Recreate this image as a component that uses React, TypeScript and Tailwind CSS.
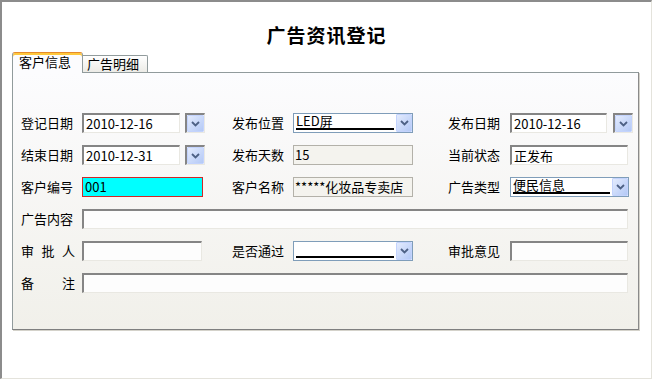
import React from "react";

const sunken =
  "border-t-2 border-l-2 border-b border-r border-t-[#858585] border-l-[#858585] border-b-[#e9e8e2] border-r-[#e9e8e2]";

function Chevron() {
  return (
    <svg width="9" height="6" viewBox="0 0 9 6">
      <path d="M1 1 L4.5 4.5 L8 1" fill="none" stroke="#4d6185" strokeWidth="1.8" />
    </svg>
  );
}

function DropBtn({ className = "" }: { className?: string }) {
  return (
    <div
      className={`flex items-center justify-center rounded-[1px] border border-[#c3d3fd] bg-linear-to-br from-[#e3ebfd] to-[#b4c9f6] ${className}`}
    >
      <Chevron />
    </div>
  );
}

function Label({ text, w = "w-[54px] mr-[7px]" }: { text: string; w?: string }) {
  return <div className={`${w} shrink-0 whitespace-nowrap text-[13px] leading-[20px] text-black`}>{text}</div>;
}

function Input({ value = "", w, bg = "bg-white" }: { value?: string; w: string; bg?: string }) {
  return (
    <div className={`${sunken} ${bg} ${w} h-[20px] shrink-0 overflow-hidden whitespace-nowrap px-[2px] text-[13px] leading-[17px]`}>
      {value}
    </div>
  );
}

function ReadOnly({ value, w }: { value: string; w: string }) {
  return (
    <div className={`${w} h-[20px] shrink-0 overflow-hidden whitespace-nowrap border border-[#b3b1a9] bg-[#f4f3ee] px-[1px] text-[13px] leading-[18px]`}>
      {value}
    </div>
  );
}

function DateBtn({ ml }: { ml: string }) {
  return (
    <div className={`${sunken} ${ml} flex h-[20px] w-[20px] shrink-0 bg-white`}>
      <DropBtn className="h-full w-full" />
    </div>
  );
}

function Select({ value, w }: { value: string; w: string }) {
  return (
    <div className={`${w} flex h-[20px] shrink-0 border border-[#7f9db9] bg-white`}>
      <div className="ml-[2px] mr-[2px] flex flex-1 items-end">
        <div className="mb-[2px] h-[16px] w-full whitespace-nowrap border-b-2 border-black text-[13px] leading-[14px]">
          {value}
        </div>
      </div>
      <DropBtn className="h-[18px] w-[16px]" />
    </div>
  );
}

export default function App() {
  return (
    <div className="h-[380px] w-[654px] bg-white font-['Noto_Sans_CJK_SC','Liberation_Sans',sans-serif] text-black">
      <div className="flex h-[379px] w-[652px] flex-col border-b border-l-2 border-r border-t-2 border-b-[#e4e3dc] border-l-[#8c8c8c] border-r-[#e4e3dc] border-t-[#8c8c8c]">
        <div className="h-[50px] pt-[23px] text-center text-[19px] font-bold leading-[20px] tracking-[1px]">
          广告资讯登记
        </div>

        <div className="ml-[10px] flex h-[20px] items-end">
          <div className="relative z-10 h-[21px] w-[71px] translate-y-[1px] rounded-t-[3px] border border-b-0 border-[#919b9c] border-t-[#e68b2c] bg-[#fcfcfe] pl-[6px] text-[13px] leading-[18px] shadow-[inset_0_2px_0_#ffc83c]">
            客户信息
          </div>
          <div className="h-[17px] w-[65px] rounded-tr-[2px] border border-b-0 border-l-0 border-[#919b9c] bg-linear-to-b from-white to-[#ecebe6] pl-[4px] text-[13px] leading-[16px]">
            广告明细
          </div>
        </div>

        <div className="ml-[10px] h-[258px] w-[627px] border border-[#919b9c] border-b-[#7f7f7f] border-r-[#8a8a8a] bg-linear-to-b from-[#fcfcfe] to-[#f1f0ea] pl-[8px] pt-[40px] shadow-[1px_1px_0_#d4d2ca]">
          <div className="flex flex-col gap-[12px]">
            <div className="flex">
              <div className="flex w-[211px]">
                <Label text="登记日期" />
                <Input value="2010-12-16" w="w-[98px]" />
                <DateBtn ml="ml-[5px]" />
              </div>
              <div className="flex w-[216px]">
                <Label text="发布位置" w="w-[55px] mr-[6px]" />
                <Select value="LED屏" w="w-[120px]" />
              </div>
              <div className="flex">
                <Label text="发布日期" w="w-[55px] mr-[7px]" />
                <Input value="2010-12-16" w="w-[97px]" />
                <DateBtn ml="ml-[6px]" />
              </div>
            </div>

            <div className="flex">
              <div className="flex w-[211px]">
                <Label text="结束日期" />
                <Input value="2010-12-31" w="w-[98px]" />
                <DateBtn ml="ml-[5px]" />
              </div>
              <div className="flex w-[216px]">
                <Label text="发布天数" w="w-[55px] mr-[6px]" />
                <ReadOnly value="15" w="w-[120px]" />
              </div>
              <div className="flex">
                <Label text="当前状态" w="w-[55px] mr-[7px]" />
                <Input value="正发布" w="w-[118px]" />
              </div>
            </div>

            <div className="flex">
              <div className="flex w-[211px]">
                <Label text="客户编号" />
                <div className="h-[20px] w-[121px] border border-[#d02828] bg-[#00ffff] px-[2px] text-[13px] leading-[18px]">
                  001
                </div>
              </div>
              <div className="flex w-[216px]">
                <Label text="客户名称" w="w-[55px] mr-[6px]" />
                <ReadOnly value="*****化妆品专卖店" w="w-[120px]" />
              </div>
              <div className="flex">
                <Label text="广告类型" w="w-[55px] mr-[7px]" />
                <Select value="便民信息" w="w-[119px]" />
              </div>
            </div>

            <div className="flex">
              <Label text="广告内容" />
              <Input w="w-[546px]" bg="bg-[#fdfdfd]" />
            </div>

            <div className="flex">
              <div className="flex w-[211px]">
                <div className="mr-[7px] flex w-[54px] justify-between text-[13px] leading-[20px]">
                  <span>审</span>
                  <span>批</span>
                  <span>人</span>
                </div>
                <Input w="w-[120px]" bg="bg-[#fdfdfd]" />
              </div>
              <div className="flex w-[216px]">
                <Label text="是否通过" w="w-[55px] mr-[6px]" />
                <Select value="" w="w-[120px]" />
              </div>
              <div className="flex">
                <Label text="审批意见" w="w-[55px] mr-[7px]" />
                <Input w="w-[118px]" bg="bg-[#fdfdfd]" />
              </div>
            </div>

            <div className="flex">
              <div className="mr-[7px] flex w-[54px] justify-between text-[13px] leading-[20px]">
                <span>备</span>
                <span>注</span>
              </div>
              <Input w="w-[546px]" bg="bg-[#fdfdfd]" />
            </div>
          </div>
        </div>
      </div>
    </div>
  );
}
